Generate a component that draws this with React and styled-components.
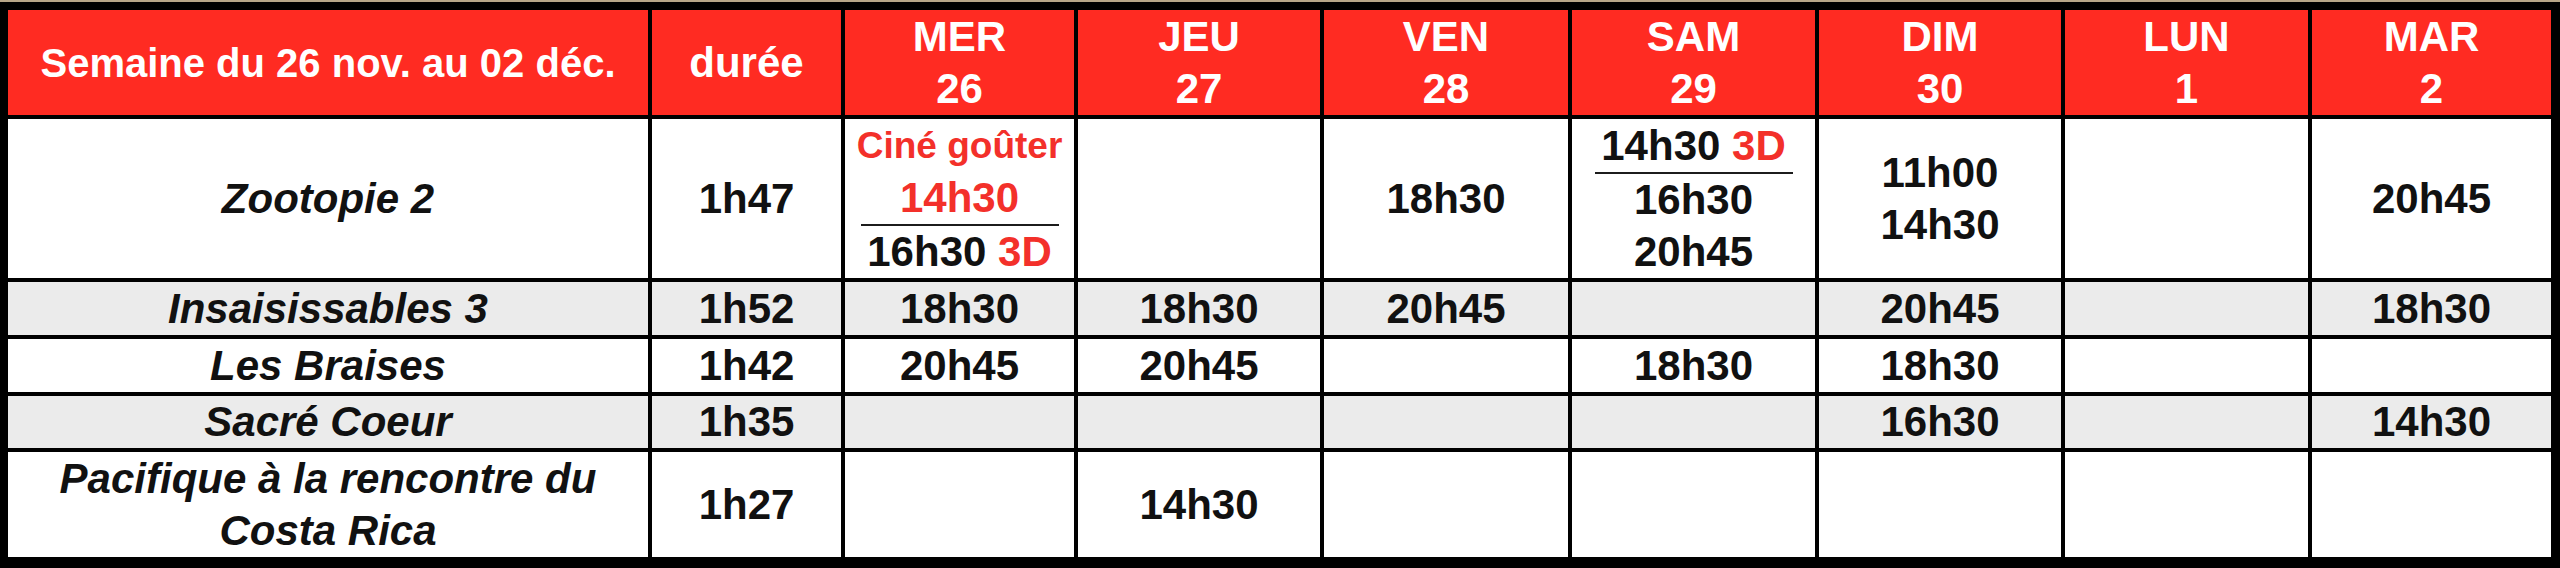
import styled, { createGlobalStyle } from 'styled-components'

const GlobalStyle = createGlobalStyle`
  html, body {
    margin: 0;
    padding: 0;
    background: #000;
  }
  body {
    font-family: 'Liberation Sans', Arial, Helvetica, sans-serif;
  }
`

const RED = '#ff2b22'
const TEXT_RED = '#f3302a'

const days = [
  { name: 'MER', num: '26' },
  { name: 'JEU', num: '27' },
  { name: 'VEN', num: '28' },
  { name: 'SAM', num: '29' },
  { name: 'DIM', num: '30' },
  { name: 'LUN', num: '1' },
  { name: 'MAR', num: '2' },
]

// each show: string, or { time, tag, red, small, rule }
const films = [
  {
    title: 'Zootopie 2',
    duration: '1h47',
    shows: [
      [
        { time: 'Ciné goûter', red: true, small: true },
        { time: '14h30', red: true, rule: true },
        { time: '16h30', tag: '3D' },
      ],
      [],
      ['18h30'],
      [{ time: '14h30', tag: '3D', rule: true }, '16h30', '20h45'],
      ['11h00', '14h30'],
      [],
      ['20h45'],
    ],
  },
  {
    title: 'Insaisissables 3',
    duration: '1h52',
    shows: [['18h30'], ['18h30'], ['20h45'], [], ['20h45'], [], ['18h30']],
  },
  {
    title: 'Les Braises',
    duration: '1h42',
    shows: [['20h45'], ['20h45'], [], ['18h30'], ['18h30'], [], []],
  },
  {
    title: 'Sacré Coeur',
    duration: '1h35',
    shows: [[], [], [], [], ['16h30'], [], ['14h30']],
  },
  {
    title: 'Pacifique à la rencontre du Costa Rica',
    duration: '1h27',
    shows: [[], ['14h30'], [], [], [], [], []],
  },
]

const Schedule = styled.div`
  display: grid;
  grid-template-columns: 640px 189px 229px 242px 244px 243px 242px 243px 239px;
  grid-template-rows: 105px 159px 53px 53px 52px 105px;
  gap: 4px;
  padding: 8px 9px 11px 8px;
  border-top: 2px solid #b8a688;
  background: #000;
  box-sizing: border-box;
  width: 2560px;
  height: 568px;
`

const HeadCell = styled.div`
  background: ${RED};
  color: #fff;
  font-weight: 700;
  font-size: ${(p) => (p.$wide ? '40px' : '42px')};
  line-height: 52px;
  display: flex;
  flex-direction: column;
  align-items: center;
  justify-content: center;
  text-align: center;
`

const Cell = styled.div`
  background: ${(p) => (p.$shade ? '#ebebeb' : '#fff')};
  color: #111;
  font-weight: 700;
  font-size: 42px;
  line-height: 52px;
  display: flex;
  flex-direction: column;
  align-items: center;
  justify-content: center;
  text-align: center;
`

const Title = styled(Cell)`
  font-style: italic;
  padding: 0 16px;
`

const Line = styled.div`
  color: ${(p) => (p.$red ? TEXT_RED : '#111')};
  font-size: ${(p) => (p.$small ? '37px' : '42px')};
  white-space: nowrap;
  ${(p) =>
    p.$rule &&
    `
    width: 198px;
    border-bottom: 2px solid #1c1c1c;
  `}
`

const Tag = styled.span`
  color: ${TEXT_RED};
`

const Show = ({ show }) => {
  const s = typeof show === 'string' ? { time: show } : show
  return (
    <Line $red={s.red} $small={s.small} $rule={s.rule}>
      {s.time}
      {s.tag && (
        <>
          {' '}
          <Tag>{s.tag}</Tag>
        </>
      )}
    </Line>
  )
}

const App = () => {
  return (
    <>
      <GlobalStyle />
      <Schedule>
        <HeadCell $wide>Semaine du 26 nov. au 02 déc.</HeadCell>
        <HeadCell>durée</HeadCell>
        {days.map((d) => (
          <HeadCell key={d.name}>
            <div>{d.name}</div>
            <div>{d.num}</div>
          </HeadCell>
        ))}

        {films.map((film, i) => {
          const shade = i % 2 === 1
          return [
            <Title key={film.title} $shade={shade}>
              {film.title}
            </Title>,
            <Cell key={film.title + '-d'} $shade={shade}>
              {film.duration}
            </Cell>,
            ...film.shows.map((list, j) => (
              <Cell key={film.title + j} $shade={shade}>
                {list.map((show, k) => (
                  <Show key={k} show={show} />
                ))}
              </Cell>
            )),
          ]
        })}
      </Schedule>
    </>
  )
}

export default App
